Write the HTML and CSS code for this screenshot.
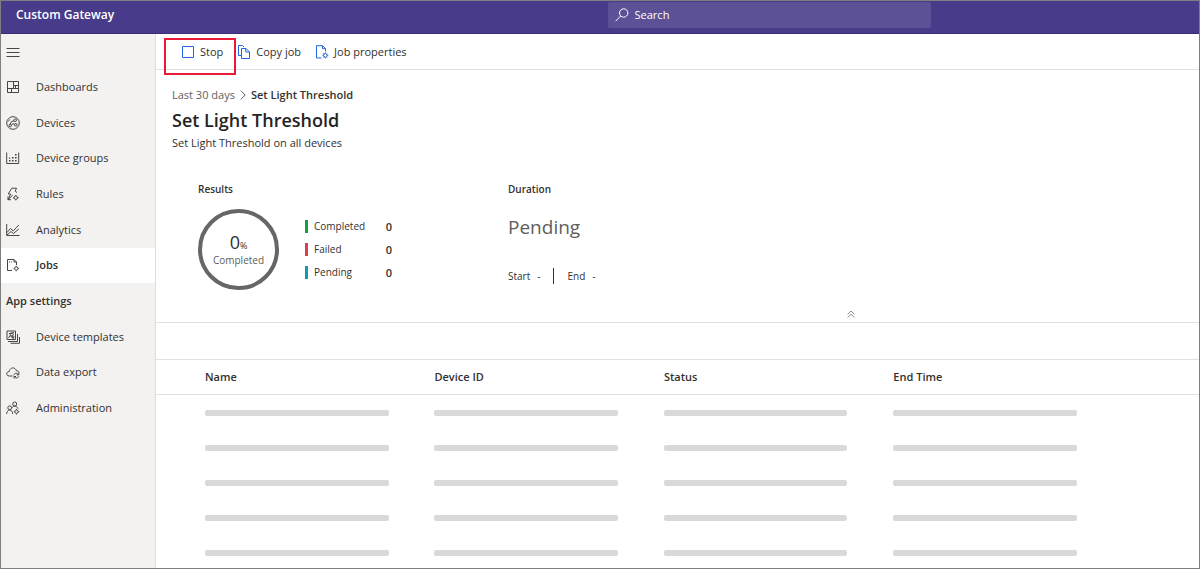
FILE: index.html
```html
<!DOCTYPE html>
<html lang="en">
<head>
<meta charset="utf-8">
<meta name="viewport" content="width=device-width, initial-scale=1">
<title>Custom Gateway - Jobs</title>
<link rel="stylesheet" href="styles.css">
</head>
<body>
<div class="app">
  <header class="topbar">
    <div class="brand">Custom Gateway</div>
    <label class="search">
      <svg class="search-icon" viewBox="0 0 14 14" aria-hidden="true"><circle cx="8.700" cy="5" r="4.200"/><path d="M5.600 8 .6 13.200"/></svg>
      <input class="search-input" type="search" placeholder="Search" aria-label="Search">
    </label>
  </header>
  <div class="body">
    <aside class="sidebar">
      <button class="menu-button" type="button" aria-label="Toggle navigation">
        <svg class="icon" viewBox="0 0 14 14" aria-hidden="true"><path d="M.5 3.500h13M.5 7.500h13M.5 11.500h13"/></svg>
      </button>
      <nav class="nav">
        <a class="nav-item" href="#"><svg class="icon" viewBox="0 0 14 14" aria-hidden="true"><path d="M1.500 1.500h11v11h-11zM7.500 1.500v7M1.500 8.500h11M5.500 8.500v4M7.500 5.500h5M9.500 5.500v3"/></svg>Dashboards</a>
        <a class="nav-item" href="#"><svg class="icon" viewBox="0 0 14 14" aria-hidden="true"><circle cx="7" cy="7" r="6.300"/><circle cx="9.200" cy="4.200" r="1.300"/><circle cx="9.800" cy="8.800" r="1.300"/><circle cx="4.200" cy="9.600" r="1.200"/><path d="M8 5 5.500 5.500 4 8.400M5.400 9.600l1.400-2 1.800.800M2 5.500l2-2"/></svg>Devices</a>
        <a class="nav-item" href="#"><svg class="icon" viewBox="0 0 14 14" aria-hidden="true"><path d="M.7 1.500v11h12V1.500"/><path class="dots" d="M3 9h1.600v1.600H3zM6 9h1.600v1.600H6zM9 9h1.600v1.600H9zM6 6h1.600v1.600H6zM9 6h1.600v1.600H9zM9 3h1.600v1.600H9zM3 6.500h1.200v1.200H3z"/></svg>Device groups</a>
        <a class="nav-item" href="#"><svg class="icon" viewBox="0 0 14 14" aria-hidden="true"><path d="M11 5.500 9.200 4.200 10.500 1.200H5.800L2.200 7h2.500L2 12.700 6.800 8M2 9.500v3.200h3"/><circle cx="9.800" cy="10.700" r="1.700"/><path d="M7 10.700h1M11.500 10.700h1.200M9.800 12.400v1M9.800 8v1"/></svg>Rules</a>
        <a class="nav-item" href="#"><svg class="icon" viewBox="0 0 14 14" aria-hidden="true"><path d="M.7 1v11.500H13.500M1 9.500 4.500 5.500l2.700 2.400L12.800 2M1 12l4-3.500 2.400 2L12.800 6"/></svg>Analytics</a>
        <a class="nav-item active" href="#" aria-current="page"><svg class="icon" viewBox="0 0 14 14" aria-hidden="true"><path d="M6 12.500H1.500v-11H8L10.500 4v3M8 1.500V4h2.500M3 4h1M5 4h1"/><circle cx="10.300" cy="10.500" r="1.700"/><path d="M10.300 7.800v1M10.300 12.200v1M7.600 10.500h1M12 10.500h1"/></svg>Jobs</a>
        <h2 class="nav-heading">App settings</h2>
        <a class="nav-item" href="#"><svg class="icon" viewBox="0 0 14 14" aria-hidden="true"><path d="M1 1h8.500v8.500H1zM2 11.500h9.500V4M4.500 13.300h9V7M2.500 8 4 5.500 7.500 8.500M3 3.500h2l3-1"/><circle cx="5.700" cy="4.300" r="1.500"/><circle cx="7" cy="7" r="1"/></svg>Device templates</a>
        <a class="nav-item" href="#"><svg class="icon" viewBox="0 0 14 14" aria-hidden="true"><path d="M6.500 11H3.200C-.3 10.800.2 6.500 3.200 6.700 3.800 1.700 9.800 2 10.200 5.700c1.700 0 2.800 1 2.900 2.300"/><path d="M7.800 10.300c.4-2.500 3.700-2.600 4.700-.6M12.800 7.800v2.100h-2.100M12.800 11.200c-.7 2.200-3.600 2.300-4.500.5M8 13.500v-2h2"/></svg>Data export</a>
        <a class="nav-item" href="#"><svg class="icon" viewBox="0 0 14 14" aria-hidden="true"><circle cx="8.700" cy="3" r="2"/><circle cx="3.700" cy="6.800" r="1.900"/><path d="M.7 13c0-5.200 6-5.200 6 0M6 6.700c1.500-2.300 5.300-2 6 1"/><circle cx="10.500" cy="10.700" r="1.700"/><path d="M10.500 8v1M10.500 12.400v1.100M7.900 10.700h1M12.200 10.700h1.200"/></svg>Administration</a>
      </nav>
    </aside>
    <main class="main">
      <div class="toolbar">
        <button class="command highlighted" type="button"><svg class="icon" viewBox="0 0 14 14" aria-hidden="true"><path d="M1.500 1.500h11v11h-11z"/></svg>Stop</button>
        <button class="command" type="button"><svg class="icon" viewBox="0 0 14 14" aria-hidden="true"><path d="M4.500 10.500h-3v-10h4L7 2M4.500 3.500h4.500l3.500 3.500v6.500h-8zM8.800 3.500V7h3.700"/></svg>Copy job</button>
        <button class="command" type="button"><svg class="icon" viewBox="0 0 14 14" aria-hidden="true"><path d="M6.500 13H1.500V.7H7.500L10.500 3.700V6.500M7.500.7v3h3"/><circle cx="10.300" cy="10.400" r="1.800"/><path d="M10.300 7.500v1.100M10.300 12.200v1.200M7.500 10.400h1M12.100 10.400h1.200M8.300 8.500l.7.600M12.300 8.500l-.7.600M8.300 12.300l.7-.6M12.300 12.300l-.7-.6"/></svg>Job properties</button>
      </div>
      <section class="job">
        <nav class="breadcrumb" aria-label="Breadcrumb">
          <a class="crumb" href="#">Last 30 days</a>
          <svg class="crumb-arrow" viewBox="0 0 6 10" aria-hidden="true"><path d="M.8.6 5.200 5 .8 9.400"/></svg>
          <span class="crumb-current">Set Light Threshold</span>
        </nav>
        <h1 class="title">Set Light Threshold</h1>
        <p class="subtitle">Set Light Threshold on all devices</p>
        <div class="summary">
          <section class="results">
            <h2 class="label">Results</h2>
            <div class="results-body">
              <div class="ring">
                <div class="ring-value">0<span class="ring-unit">%</span></div>
                <div class="ring-label">Completed</div>
              </div>
              <dl class="legend">
                <div class="legend-row completed"><dt>Completed</dt><dd>0</dd></div>
                <div class="legend-row failed"><dt>Failed</dt><dd>0</dd></div>
                <div class="legend-row pending"><dt>Pending</dt><dd>0</dd></div>
              </dl>
            </div>
          </section>
          <section class="duration">
            <h2 class="label">Duration</h2>
            <p class="duration-value">Pending</p>
            <div class="times">
              <span class="time">Start<span>-</span></span>
              <span class="time end">End<span>-</span></span>
            </div>
          </section>
        </div>
        <button class="collapse" type="button" aria-label="Collapse summary">
          <svg class="collapse-icon" viewBox="0 0 8 8" aria-hidden="true"><path d="M.7 4.300 4 1l3.300 3.300M.7 7.500 4 4.200l3.300 3.300"/></svg>
        </button>
      </section>
      <table class="devices">
        <colgroup><col class="col-lead"><col class="col"><col class="col"><col class="col"><col class="col"><col></colgroup>
        <thead><tr><td></td><th scope="col">Name</th><th scope="col">Device ID</th><th scope="col">Status</th><th scope="col">End Time</th><td></td></tr></thead>
        <tbody>
          <tr><td></td><td><div class="bar"></div></td><td><div class="bar"></div></td><td><div class="bar"></div></td><td><div class="bar"></div></td><td></td></tr>
          <tr><td></td><td><div class="bar"></div></td><td><div class="bar"></div></td><td><div class="bar"></div></td><td><div class="bar"></div></td><td></td></tr>
          <tr><td></td><td><div class="bar"></div></td><td><div class="bar"></div></td><td><div class="bar"></div></td><td><div class="bar"></div></td><td></td></tr>
          <tr><td></td><td><div class="bar"></div></td><td><div class="bar"></div></td><td><div class="bar"></div></td><td><div class="bar"></div></td><td></td></tr>
          <tr><td></td><td><div class="bar"></div></td><td><div class="bar"></div></td><td><div class="bar"></div></td><td><div class="bar"></div></td><td></td></tr>
        </tbody>
      </table>
    </main>
  </div>
</div>
</body>
</html>
```

FILE: styles.css
```css
* { box-sizing: border-box; }

body {
  margin: 0;
  font: 11px/16px "Open Sans", "Noto Sans", sans-serif;
  color: #323130;
  background: #fff;
}

h1, h2, p, dl, dd { margin: 0; }
a { color: inherit; text-decoration: none; }
button { margin: 0; padding: 0; border: 0; background: none; font: inherit; color: inherit; }

svg { fill: none; stroke: currentColor; flex: none; }
.icon { width: 14px; height: 14px; color: #484644; }
.dots { fill: currentColor; stroke: none; }

.app {
  display: flex;
  flex-direction: column;
  height: 100vh;
  border: 1px solid #7f7f7f;
}

.topbar {
  display: grid;
  grid-template-columns: 1fr 27% 268px;
  align-items: start;
  height: 33px;
  flex: none;
  background: #483b8a;
  border-bottom: 1px solid #3b2c7b;
  color: #fff;
}
.brand { padding-left: 15px; font-size: 12px; font-weight: 600; line-height: 28px; }
.search {
  display: flex;
  align-items: center;
  gap: 6px;
  height: 26px;
  margin-top: 1px;
  padding: 0 7px;
  border-radius: 2px;
  background: #5c5196;
}
.search-icon { width: 14px; height: 14px; }
.search-input { flex: 1; min-width: 0; padding: 0; border: 0; background: none; font: inherit; color: #fff; outline: 0; }
.search-input::placeholder { color: #fff; opacity: 1; }

.body { display: flex; flex: 1; min-height: 0; }

.sidebar { width: 155px; flex: none; background: #f3f2f1; border-right: 1px solid #dedddc; }
.menu-button { display: flex; align-items: center; width: 100%; height: 35px; padding-left: 5px; }
.nav { display: grid; grid-template-rows: repeat(10, 1fr); height: 357px; }
.nav-item { display: flex; align-items: center; gap: 16px; padding-left: 5px; }
.nav-item.active { background: #fff; font-weight: 600; }
.nav-heading { padding-left: 5px; font-size: 11px; font-weight: 600; align-self: center; }

.main { flex: 1; min-width: 0; overflow: auto; scrollbar-width: none; }

.toolbar { display: flex; height: 36px; padding-left: 25px; gap: 14px; border-bottom: 1px solid #e1e1e1; }
.command { display: flex; align-items: center; gap: 5px; position: relative; }
.command .icon { color: #2266e3; }
.highlighted::after {
  content: "";
  position: absolute;
  inset: 4px -13px -6px -17px;
  border: 2px solid #e81a38;
}

.job { padding: 17px 16px 0; border-bottom: 1px solid #e1e1e1; }
.breadcrumb { display: flex; align-items: center; gap: 5px; }
.crumb { color: #605e5c; }
.crumb-arrow { width: 6px; height: 10px; color: #605e5c; }
.crumb-current { font-weight: 600; }
.title { margin-top: 3px; font-size: 18px; font-weight: 600; line-height: 28px; color: #252423; }
.subtitle { margin-top: 1px; }

.summary { display: flex; padding: 30px 26px 0; }
.label { font-size: 10px; font-weight: 600; line-height: 16px; }
.results { width: 310px; }
.results-body { display: flex; align-items: center; gap: 26px; margin-top: 12px; }
.ring {
  display: flex;
  flex-direction: column;
  align-items: center;
  justify-content: center;
  width: 81px;
  height: 81px;
  border: 4px solid #666;
  border-radius: 50%;
}
.ring-value { font-size: 18px; line-height: 20px; }
.ring-unit { font-size: 9px; line-height: 9px; }
.ring-label { font-size: 10px; line-height: 16px; color: #605e5c; }
.legend { display: grid; gap: 10px; font-size: 10px; line-height: 13px; }
.legend-row { display: flex; justify-content: space-between; width: 87px; padding-left: 6px; border-left: 3px solid; }
.legend-row dt, .legend-row dd { color: #323130; }
.legend-row dd { font-size: 11px; font-weight: 600; }
.completed { border-color: #13a13d; }
.failed { border-color: #dc3f4f; }
.pending { border-color: #0f9bb5; }

.duration-value { margin-top: 17px; font-size: 19px; line-height: 26px; color: #605e5c; }
.times { display: flex; margin-top: 28px; font-size: 10px; line-height: 16px; }
.time { display: flex; gap: 7px; padding-right: 13px; }
.time.end { padding-left: 13px; border-left: 1px solid #323130; }

.collapse { display: block; width: 16px; height: 16px; margin: 16px 0 0 66.4%; }
.collapse-icon { display: block; width: 8px; height: 8px; margin: auto; color: #8a8886; }

.devices { width: 100%; margin-top: 36px; border-collapse: separate; border-spacing: 0; border-top: 1px solid #e1e1e1; table-layout: fixed; }
.col-lead { width: 49px; }
.col { width: 22%; }
.devices th, .devices td { height: 35px; padding: 0; text-align: left; font-weight: 600; }
.devices thead th, .devices thead td { border-bottom: 1px solid #e1e1e1; }
.bar { width: 80%; height: 6px; border-radius: 2px; background: #d9d9d9; }
```
